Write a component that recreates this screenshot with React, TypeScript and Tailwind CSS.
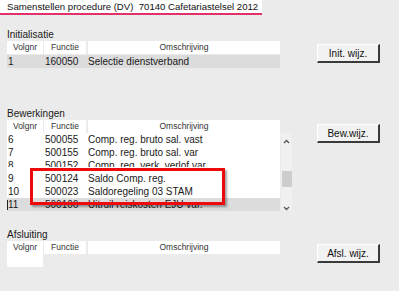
import React from "react";

const font = { fontFamily: '"Liberation Sans", Arial, sans-serif' };

type RowData = { nr: string; fn: string; oms: string };

function Header() {
  return (
    <div className="flex h-[13px] text-[8.5px] leading-[13px] text-[#333]">
      <div className="w-[36px] bg-white text-center">Volgnr</div>
      <div className="ml-[1px] w-[42px] bg-white text-center">Functie</div>
      <div className="ml-[2px] flex-1 bg-white text-center">Omschrijving</div>
    </div>
  );
}

function Row({ row, className = "" }: { row: RowData; className?: string }) {
  return (
    <div className={`flex h-[13px] whitespace-nowrap text-[10px] leading-[13px] text-[#1a1a1a] ${className}`}>
      <div className="w-[37px] pl-[1px]">{row.nr}</div>
      <div className="w-[43px] pl-[1px]">{row.fn}</div>
      <div className="flex-1 pl-[1px]">{row.oms}</div>
    </div>
  );
}

function Button({ label, className = "" }: { label: string; className?: string }) {
  return (
    <div
      className={`flex h-[19px] w-[63px] items-center justify-center border-t border-l border-t-white border-l-white border-r-2 border-b-2 border-r-[#3a3a3a] border-b-[#3a3a3a] bg-[#f2f2f2] text-[10px] text-[#111] ${className}`}
    >
      {label}
    </div>
  );
}

function Chevron({ down = false }: { down?: boolean }) {
  return (
    <svg width="7" height="5" viewBox="0 0 7 5" className={down ? "rotate-180" : ""}>
      <path d="M1 4 L3.5 1.5 L6 4" fill="none" stroke="#555" strokeWidth="1.3" />
    </svg>
  );
}

export default function App() {
  const rows: RowData[] = [
    { nr: "6", fn: "500055", oms: "Comp. reg. bruto sal. vast" },
    { nr: "7", fn: "500155", oms: "Comp. reg. bruto sal. var" },
  ];

  return (
    <div className="relative h-[291px] w-[399px] overflow-hidden bg-[#ebebeb]" style={font}>
      <div className="h-[15px] w-[262px] border-b-2 border-[#e2306a] bg-white pl-[7px] text-[9.6px] leading-[13px] whitespace-nowrap text-[#111]">
        Samenstellen procedure (DV)&nbsp;&nbsp;70140 Cafetariastelsel 2012
      </div>

      {/* Initialisatie */}
      <div className="mt-[14px] flex">
        <div className="ml-[7px] w-[273px]">
          <div className="h-[12px] text-[10px] leading-[12px] text-[#1a1a1a]">Initialisatie</div>
          <Header />
          <Row row={{ nr: "1", fn: "160050", oms: "Selectie dienstverband" }} className="mt-[1px] bg-[#dcdcdc]" />
        </div>
        <Button label="Init. wijz." className="ml-[37px] mt-[15px]" />
      </div>

      {/* Bewerkingen */}
      <div className="mt-[40px] flex">
        <div className="ml-[7px] w-[285px]">
          <div className="h-[12px] text-[10px] leading-[12px] text-[#1a1a1a]">Bewerkingen</div>
          <div className="w-[273px]">
            <Header />
          </div>
          <div className="flex">
            <div className="w-[273px] bg-white">
              {rows.map((r) => (
                <Row key={r.nr} row={r} />
              ))}
              <div className="h-[13px] overflow-hidden">
                <div className="h-[8px] overflow-hidden">
                  <Row row={{ nr: "8", fn: "500152", oms: "Comp. reg. verk. verlof var." }} />
                </div>
              </div>
              <Row row={{ nr: "9", fn: "500124", oms: "Saldo Comp. reg." }} />
              <Row row={{ nr: "10", fn: "500023", oms: "Saldoregeling 03 STAM" }} />
              <div className="relative">
                <Row row={{ nr: "11", fn: "500106", oms: "Uitruil reiskosten EJU var." }} className="bg-[#dcdcdc]" />
                <div className="absolute top-[2px] left-0 h-[10px] w-[1px] bg-[#222]" />
              </div>
            </div>
            <div className="ml-[1px] flex w-[11px] flex-col items-center bg-[#f0f0f0] pt-[6px]">
              <Chevron />
              <div className="mt-[27px] h-[16px] w-[10px] bg-[#cdcdcd]" />
              <div className="mt-[19px]">
                <Chevron down />
              </div>
            </div>
          </div>
        </div>
        <Button label="Bew.wijz." className="ml-[25px] mt-[16px]" />
      </div>

      {/* Afsluiting */}
      <div className="mt-[18px] flex">
        <div className="ml-[7px] w-[273px]">
          <div className="h-[12px] text-[10px] leading-[12px] text-[#1a1a1a]">Afsluiting</div>
          <Header />
          <div className="h-[13px] w-[36px] bg-white" />
        </div>
        <Button label="Afsl. wijz." className="ml-[37px] mt-[15px]" />
      </div>

      {/* annotation */}
      <div className="absolute top-[168px] left-[30px] h-[37px] w-[195px] border-[3px] border-[#ee0a0a] shadow-[2px_2px_2px_rgba(0,0,0,0.35)]" />
    </div>
  );
}
